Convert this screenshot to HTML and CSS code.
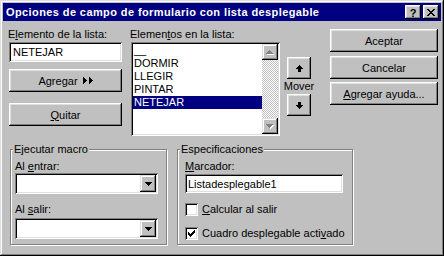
FILE: index.html
```html
<!DOCTYPE html>
<html lang="es">
<head>
<meta charset="utf-8">
<title>Opciones de campo de formulario con lista desplegable</title>
<link rel="stylesheet" href="styles.css">
</head>
<body>
<div class="win">
  <div class="titlebar">
    <span class="title">Opciones de campo de formulario con lista desplegable</span>
    <div class="tbtns">
      <div class="tb help">?</div>
      <div class="tb"><svg class="px" width="8" height="7" viewBox="0 0 8 7"><path d="M0 0h2v1H0z M6 0h2v1H6z M1 1h2v1H1z M5 1h2v1H5z M2 2h4v1H2z M3 3h2v1H3z M2 4h4v1H2z M1 5h2v1H1z M5 5h2v1H5z M0 6h2v1H0z M6 6h2v1H6z" fill="#000"/></svg></div>
    </div>
  </div>
  <div class="client">
    <div class="top">
      <div class="col1">
        <div class="lbl">E<u>l</u>emento de la lista:</div>
        <div class="field f1">NETEJAR</div>
        <div class="btn b-add">A<u>g</u>regar&nbsp;<svg class="px" width="10" height="7" viewBox="0 0 10 7"><path d="M0 0h1v7H0z M1 1h1v5H1z M2 2h1v3H2z M3 3h1v1H3z M6 0h1v7H6z M7 1h1v5H7z M8 2h1v3H8z M9 3h1v1H9z" fill="#000"/></svg></div>
        <div class="btn b-del"><u>Q</u>uitar</div>
      </div>
      <div class="col2">
        <div class="lbl">Elemen<u>t</u>os en la lista:</div>
        <div class="list">
          <div class="items">
            <div class="item">__</div>
            <div class="item">DORMIR</div>
            <div class="item">LLEGIR</div>
            <div class="item">PINTAR</div>
            <div class="item sel">NETEJAR</div>
          </div>
          <div class="sbar">
            <div class="sbtn"><svg class="px" width="8" height="5" viewBox="0 0 8 5"><path d="M4 1h1v1H4z M3 2h3v1H3z M2 3h5v1H2z M1 4h7v1H1z" fill="#fff"/><path d="M3 0h1v1H3z M2 1h3v1H2z M1 2h5v1H1z M0 3h7v1H0z" fill="#808080"/></svg></div>
            <div class="track"></div>
            <div class="sbtn"><svg class="px" width="8" height="5" viewBox="0 0 8 5"><path d="M1 1h7v1H1z M2 2h5v1H2z M3 3h3v1H3z M4 4h1v1H4z" fill="#fff"/><path d="M0 0h7v1H0z M1 1h5v1H1z M2 2h3v1H2z M3 3h1v1H3z" fill="#808080"/></svg></div>
          </div>
        </div>
      </div>
      <div class="col3">
        <div class="btn mv"><svg class="px" width="7" height="7" viewBox="0 0 7 7"><path d="M3 0h1v1H3z M2 1h3v1H2z M1 2h5v1H1z M0 3h7v1H0z M2 4h3v3H2z" fill="#000"/></svg></div>
        <div class="mvlbl">Mover</div>
        <div class="btn mv"><svg class="px" width="7" height="7" viewBox="0 0 7 7"><path d="M2 0h3v3H2z M0 3h7v1H0z M1 4h5v1H1z M2 5h3v1H2z M3 6h1v1H3z" fill="#000"/></svg></div>
      </div>
      <div class="col4">
        <div class="btn rb">Aceptar</div>
        <div class="btn rb rb2">Cancelar</div>
        <div class="btn rb rb3"><u>A</u>gregar ayuda...</div>
      </div>
    </div>
    <div class="bottom">
      <div class="group g1">
        <div class="legend">Ejecutar macro</div>
        <div class="glbl">Al <u>e</u>ntrar:</div>
        <div class="combo"><div class="cbtn"><svg class="px" width="7" height="4" viewBox="0 0 7 4"><path d="M0 0h7v1H0z M1 1h5v1H1z M2 2h3v1H2z M3 3h1v1H3z" fill="#000"/></svg></div></div>
        <div class="glbl gl2">Al <u>s</u>alir:</div>
        <div class="combo c2"><div class="cbtn"><svg class="px" width="7" height="4" viewBox="0 0 7 4"><path d="M0 0h7v1H0z M1 1h5v1H1z M2 2h3v1H2z M3 3h1v1H3z" fill="#000"/></svg></div></div>
      </div>
      <div class="group g2">
        <div class="legend">Especificaciones</div>
        <div class="glbl"><u>M</u>arcador:</div>
        <div class="field f2">Listadesplegable1</div>
        <div class="chk ch1"><span class="box"></span><span><u>C</u>alcular al salir</span></div>
        <div class="chk ch2"><span class="box"><svg class="px" width="7" height="7" viewBox="0 0 7 7"><path d="M0 2h1v3H0z M1 3h1v3H1z M2 4h1v3H2z M3 3h1v3H3z M4 2h1v3H4z M5 1h1v3H5z M6 0h1v3H6z" fill="#000"/></svg></span><span>Cuadro desplegable acti<u>v</u>ado</span></div>
      </div>
    </div>
  </div>
</div>
</body>
</html>
```

FILE: styles.css
```css
* { box-sizing: border-box; }
html, body { margin: 0; padding: 0; }
body {
  background: #c0c0c0;
  font-family: "Liberation Sans", Arial, sans-serif;
  font-size: 11px;
  line-height: 13px;
  color: #000;
}
u { text-decoration: underline; text-underline-offset: 1px; }
.px { display: block; shape-rendering: crispEdges; }

.win {
  width: 444px;
  height: 256px;
  padding: 3px;
  background: #c0c0c0;
  box-shadow: inset -1px -1px #000, inset 1px 1px #dfdfdf, inset -2px -2px #808080, inset 2px 2px #fff;
  display: flex;
  flex-direction: column;
}

.titlebar {
  height: 18px;
  flex: none;
  background: #000080;
  color: #fff;
  font-weight: bold;
  line-height: 18px;
  padding-left: 3px;
  display: flex;
  justify-content: space-between;
  align-items: flex-start;
}
.title { letter-spacing: 0.4px; white-space: nowrap; }
.tbtns { display: flex; gap: 2px; margin-top: 2px; margin-right: 2px; }
.tb {
  width: 16px;
  height: 14px;
  background: #c0c0c0;
  color: #000;
  box-shadow: inset -1px -1px #000, inset 1px 1px #fff, inset -2px -2px #808080, inset 2px 2px #dfdfdf;
  display: flex;
  align-items: center;
  justify-content: center;
  line-height: 14px;
  font-size: 11px;
}
.tb.help { padding-top: 1px; }

.btn {
  background: #c0c0c0;
  box-shadow: inset -1px -1px #000, inset 1px 1px #fff, inset -2px -2px #808080, inset 2px 2px #dfdfdf;
  height: 23px;
  display: flex;
  align-items: center;
  justify-content: center;
  padding-top: 1px;
}
.field, .list, .combo, .box {
  background: #fff;
  box-shadow: inset 1px 1px #808080, inset -1px -1px #fff, inset 2px 2px #000, inset -2px -2px #dfdfdf;
}

.client { flex: 1; padding: 7px 0 0 0; }
.top { display: flex; align-items: flex-start; }

.col1 { width: 113px; margin-left: 6px; display: flex; flex-direction: column; }
.lbl { height: 13px; margin-left: -1px; white-space: nowrap; }
.field { padding: 2px 2px 2px 4px; line-height: 16px; white-space: nowrap; }
.f1 { height: 20px; margin-top: 1px; }
.b-add { margin-top: 7px; }
.b-add svg { margin-left: 2px; margin-top: -1px; }
.b-del { margin-top: 11px; }

.col2 { width: 149px; margin-left: 9px; display: flex; flex-direction: column; }
.list { height: 94px; margin-top: 1px; padding: 2px; display: flex; }
.items { flex: 1; }
.item { height: 13px; line-height: 13px; padding-left: 1px; white-space: nowrap; }
.item.sel { background: #000080; color: #fff; }
.sbar { width: 16px; display: flex; flex-direction: column; }
.sbtn {
  width: 16px; height: 16px; flex: none;
  background: #c0c0c0;
  box-shadow: inset -1px -1px #000, inset 1px 1px #dfdfdf, inset -2px -2px #808080, inset 2px 2px #fff;
  display: flex; align-items: center; justify-content: center;
}
.track {
  flex: 1;
  background-color: #c0c0c0;
  background-image: conic-gradient(#fff 25%, #c0c0c0 0 50%, #fff 0 75%, #c0c0c0 0);
  background-size: 2px 2px;
}

.col3 { width: 24px; margin-left: 7px; display: flex; flex-direction: column; align-items: center; }
.mv { width: 24px; height: 22px; padding-top: 0; }
.col3 .mv:first-child { margin-top: 29px; }
.mvlbl { height: 13px; margin: 1px -10px 1px; white-space: nowrap; text-align: center; }

.col4 { width: 108px; margin-left: 19px; display: flex; flex-direction: column; }
.rb { margin-top: 1px; }
.rb2 { margin-top: 4px; }
.rb3 { margin-top: 3px; }

.bottom { display: flex; margin-top: 13px; padding-left: 7px; align-items: flex-start; }
.group {
  height: 96px;
  border: 1px solid #808080;
  box-shadow: 1px 1px 0 #fff, inset 1px 1px 0 #fff;
  display: flex;
  flex-direction: column;
}
.g1 { width: 157px; padding-left: 4px; }
.g2 { width: 176px; margin-left: 10px; padding-left: 7px; }
.legend {
  align-self: flex-start;
  margin-top: -7px;
  margin-left: -2px;
  padding: 0 1px;
  height: 13px;
  background: #c0c0c0;
  white-space: nowrap;
}
.g2 .legend { margin-left: -5px; }
.glbl { height: 13px; margin-top: 4px; white-space: nowrap; }
.gl2 { margin-top: 9px; }
.combo { width: 143px; height: 21px; padding: 2px; display: flex; justify-content: flex-end; }
.c2 { margin-top: 2px; }
.cbtn {
  width: 16px; height: 17px;
  background: #c0c0c0;
  box-shadow: inset -1px -1px #000, inset 1px 1px #dfdfdf, inset -2px -2px #808080, inset 2px 2px #fff;
  display: flex; align-items: center; justify-content: center;
}
.f2 { width: 158px; height: 19px; margin-top: 1px; padding: 2px 2px 1px 3px; line-height: 16px; }
.chk { display: flex; align-items: center; height: 13px; gap: 4px; white-space: nowrap; }
.ch1 { margin-top: 10px; }
.ch2 { margin-top: 11px; }
.box { width: 13px; height: 13px; flex: none; display: flex; align-items: center; justify-content: center; }
```
